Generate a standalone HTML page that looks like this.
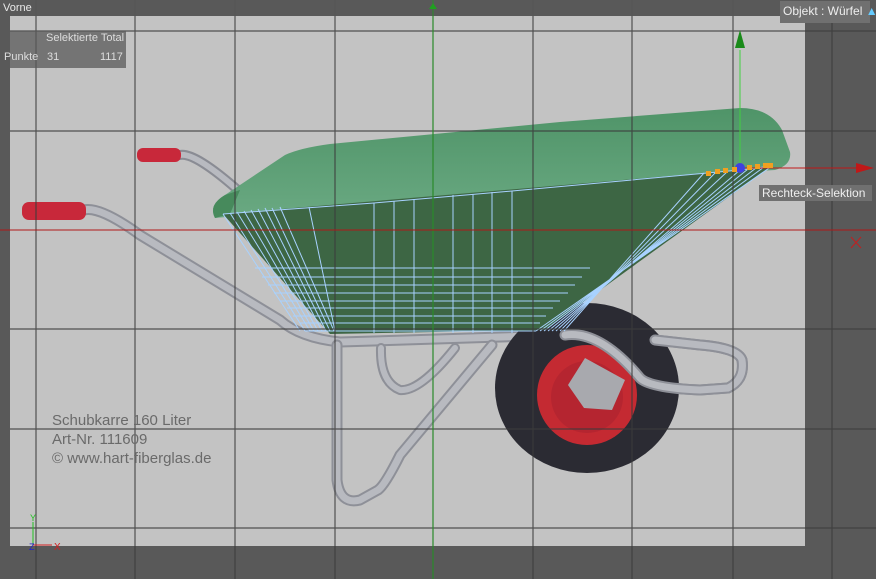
<!DOCTYPE html>
<html><head><meta charset="utf-8"><style>
html,body{margin:0;padding:0;background:#595959;width:876px;height:579px;overflow:hidden;font-family:"Liberation Sans",sans-serif}
svg{position:absolute;left:0;top:0}
.t{position:absolute;color:#e8e8e8;font-size:11px;white-space:nowrap}
</style></head><body>
<svg width="876" height="579" viewBox="0 0 876 579">
<defs>
<linearGradient id="g1" x1="0" y1="0" x2="0" y2="1"><stop offset="0" stop-color="#4f9468"/><stop offset="1" stop-color="#6aa982"/></linearGradient>
</defs>
<rect x="0" y="0" width="876" height="579" fill="#595959"/>
<rect x="10" y="16" width="795" height="530" fill="#c3c3c3"/>
<!-- handles -->
<g stroke-linecap="round" stroke-linejoin="round" fill="none">
<path d="M180 155 Q195 152 240 192" stroke="#8a8c94" stroke-width="10"/>
<path d="M180 155 Q195 152 240 192" stroke="#b8bac0" stroke-width="6"/>
<path d="M84 210 Q100 206 140 235 L280 320 Q300 338 340 342 L565 335 Q600 330 640 378 Q650 388 700 390 L728 388 Q745 380 742 360 Q738 348 700 345 L655 340" stroke="#8e9098" stroke-width="11"/>
<path d="M84 210 Q100 206 140 235 L280 320 Q300 338 340 342 L565 335 Q600 330 640 378 Q650 388 700 390 L728 388 Q745 380 742 360 Q738 348 700 345 L655 340" stroke="#b8bac0" stroke-width="7"/>
<path d="M337 345 L337 480 Q340 505 360 500 L378 490 Q385 485 400 455 L492 345" stroke="#8e9098" stroke-width="11"/>
<path d="M337 345 L337 480 Q340 505 360 500 L378 490 Q385 485 400 455 L492 345" stroke="#b8bac0" stroke-width="7"/>
<path d="M381 348 Q380 382 400 390 Q420 392 455 348" stroke="#8e9098" stroke-width="10"/>
<path d="M381 348 Q380 382 400 390 Q420 392 455 348" stroke="#b8bac0" stroke-width="6"/>
</g>
<rect x="22" y="202" width="64" height="18" rx="7" fill="#c8283a"/>
<rect x="137" y="148" width="44" height="14" rx="6" fill="#c8283a"/>
<!-- wheel -->
<ellipse cx="587" cy="388" rx="92" ry="85" fill="#2b2b33"/>
<circle cx="587" cy="395" r="50" fill="#c42a32"/>
<circle cx="587" cy="397" r="36" fill="#b52530"/>
<path d="M585 358 L625 380 L612 410 L584 408 L568 385 Z" fill="#a8a9ae"/>
<g fill="none" stroke-linecap="round">
<path d="M565 335 Q600 330 640 378 Q650 388 700 390 L728 388 Q745 380 742 360 Q738 348 700 345 L655 340" stroke="#8e9098" stroke-width="11"/>
<path d="M565 335 Q600 330 640 378 Q650 388 700 390 L728 388 Q745 380 742 360 Q738 348 700 345 L655 340" stroke="#b8bac0" stroke-width="7"/>
</g>
<!-- tub -->
<path d="M215 218 Q208 205 225 195 L285 155 Q300 148 330 144 L560 122 L740 108 Q770 108 782 130 L790 152 Q792 165 775 170 L740 172 Z" fill="url(#g1)"/>
<path d="M215 218 Q208 205 225 195 L240 190 L230 214 Z" fill="#478a5c"/>
<path d="M223 214 L740 170 L770 167 L545 330 L330 334 Z" fill="#3d6644"/>
<!-- wireframe -->
<g stroke="#a8d2ff" stroke-width="1" fill="none">
<path d="M223 214 L374 203 L512 191 L740 170 L772 166"/>
<path d="M374 203V333M394 201V333M414 199V333M433 197V333M453 195V333M473 194V333M492 192V333M512 191V333"/>
<path d="M255 268H590M262 277H582M268 285H575M274 293H568M280 301H560M287 308H553M293 316H546M300 323H540M305 331H536"/>
<path d="M223 214L300 331M230 213L305 331M237 212L310 331M244 211L314 331M251 210L318 331M258 209L322 331M265 208L326 331M272 208L330 331M280 207L334 331M309 207L335 331"/>
<path d="M772 166L536 331M764 167L540 331M756 168L544 331M748 169L548 331M740 170L552 331M728 171L556 331M716 172L560 331M704 173L564 331"/>
</g>
<!-- grid -->
<g stroke="#3c3c3c" stroke-width="1.2" opacity=".85">
<path d="M36 0V579M135 0V579M235 0V579M335 0V579M533 0V579M632 0V579M733 0V579M832 0V579"/>
<path d="M10 31H876M10 131H876M10 329H876M10 429H876M10 528H876"/>
</g>
<path d="M433 8V579" stroke="#2a8a2a" stroke-width="1.2"/>
<path d="M0 230H876" stroke="#b01818" stroke-width="1"/>
<path d="M740 168H860" stroke="#c01818" stroke-width="1"/>
<path d="M856 163L874 168L856 173Z" fill="#c01818"/>
<path d="M740 50V168" stroke="#40d040" stroke-width="1"/>
<path d="M740 30L735 48H745Z" fill="#1a8a1a"/>
<circle cx="740" cy="168" r="5" fill="#4040e0"/>
<g fill="#f0a020"><rect x="706" y="171" width="5" height="5"/><rect x="715" y="169" width="5" height="5"/><rect x="723" y="168" width="5" height="5"/><rect x="732" y="167" width="5" height="5"/><rect x="747" y="165" width="5" height="5"/><rect x="755" y="164" width="5" height="5"/><rect x="763" y="163" width="10" height="5"/></g>
<path d="M851 237L861 248M861 237L851 248" stroke="#c02020" stroke-width="1"/>
<!-- corner axis -->
<path d="M33 522V545" stroke="#20c020"/><path d="M33 545H52" stroke="#d02020"/>
<text x="30" y="521" font-size="9" fill="#20c020" font-family="Liberation Sans">Y</text>
<text x="29" y="550" font-size="9" fill="#2020d0" font-family="Liberation Sans">Z</text>
<text x="54" y="550" font-size="10" fill="#d02020" font-family="Liberation Sans">X</text>
<rect x="0" y="0" width="876" height="16" fill="#595959" opacity=".9"/>
<path d="M433 0V16" stroke="#2a8a2a"/>
<path d="M433 3L429 9H437Z" fill="#20a020"/>
</svg>
<div class="t" style="left:3px;top:2px;font-size:11px">Vorne</div>
<div style="position:absolute;left:0;top:31px;width:126px;height:37px;background:rgba(90,90,90,.75)"></div>
<div class="t" style="left:46px;top:32px;color:#ddd">Selektierte Total</div>
<div class="t" style="left:4px;top:51px;color:#ddd">Punkte</div>
<div class="t" style="left:47px;top:51px;color:#ddd">31</div>
<div class="t" style="left:100px;top:51px;color:#ddd">1117</div>
<div style="position:absolute;left:780px;top:1px;width:90px;height:22px;background:#707070"></div>
<div class="t" style="left:783px;top:4px;color:#eee;font-size:12px">Objekt : Würfel <span style="color:#6cf">▲</span></div>
<div style="position:absolute;left:759px;top:185px;width:113px;height:16px;background:#707070"></div>
<div class="t" style="left:762px;top:186px;color:#eee;font-size:12px">Rechteck-Selektion</div>
<div style="position:absolute;left:52px;top:411px;color:#6a6a6a;font-size:15px;line-height:19px">Schubkarre 160 Liter<br>Art-Nr. 111609<br>© www.hart-fiberglas.de</div>
</body></html>
